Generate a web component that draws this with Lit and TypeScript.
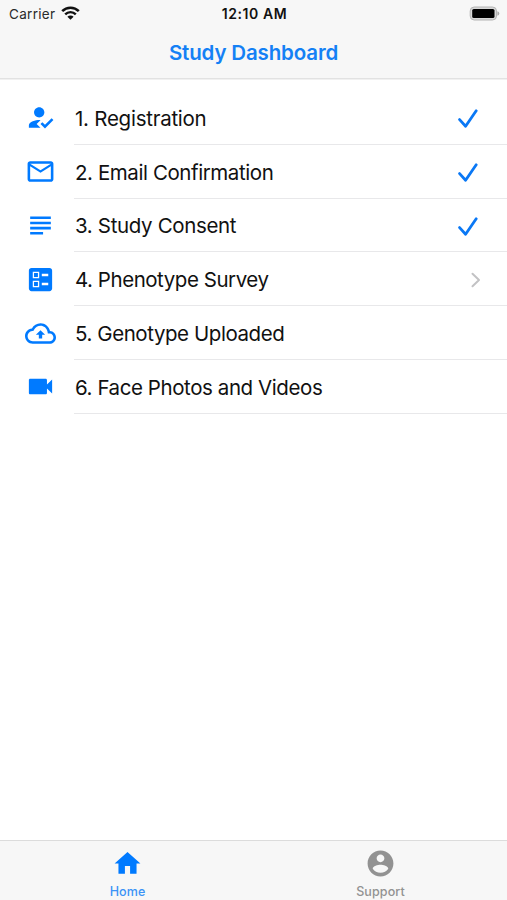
import { LitElement, html, css, svg } from "lit";
import { customElement, state } from "lit/decorators.js";
import { classMap } from "lit/directives/class-map.js";
import { styleMap } from "lit/directives/style-map.js";

const paths = {
  registered:
    "M9 17l3-2.94c-.39-.04-.68-.06-1-.06-2.67 0-8 1.34-8 4v2h9l-3-3zm2-5c2.21 0 4-1.79 4-4s-1.79-4-4-4-4 1.79-4 4 1.79 4 4 4M15.47 20.5L12 17l1.4-1.41 2.07 2.08 5.13-5.17 1.4 1.41z",
  mail: "M22 6c0-1.1-.9-2-2-2H4c-1.1 0-2 .9-2 2v12c0 1.1.9 2 2 2h16c1.1 0 2-.9 2-2V6zm-2 0l-8 5-8-5h16zm0 12H4V8l8 5 8-5v10z",
  subject: "M14 17H4v2h10v-2zm6-8H4v2h16V9zM4 15h16v-2H4v2zM4 5v2h16V5H4z",
  ballot:
    "M13 9.5h5v-2h-5v2zm0 7h5v-2h-5v2zm6 4.5H5c-1.1 0-2-.9-2-2V5c0-1.1.9-2 2-2h14c1.1 0 2 .9 2 2v14c0 1.1-.9 2-2 2zM6 11h5V6H6v5zm1-4h3v3H7V7zM6 18h5v-5H6v5zm1-4h3v3H7v-3z",
  upload:
    "M19.35 10.04C18.67 6.59 15.64 4 12 4 9.11 4 6.6 5.64 5.35 8.04 2.34 8.36 0 10.91 0 14c0 3.31 2.69 6 6 6h13c2.76 0 5-2.24 5-5 0-2.64-2.05-4.78-4.65-4.96zM19 18H6c-2.21 0-4-1.79-4-4 0-2.05 1.53-3.76 3.56-3.97l1.07-.11.5-.95C8.08 7.14 9.94 6 12 6c2.62 0 4.88 1.86 5.39 4.43l.3 1.5 1.53.11c1.56.1 2.78 1.41 2.78 2.96 0 1.65-1.35 3-3 3zM8.4 13h2.3v2.9h2.6V13h2.3L12 9.4z",
  video:
    "M17 10.5V7c0-.55-.45-1-1-1H4c-.55 0-1 .45-1 1v10c0 .55.45 1 1 1h12c.55 0 1-.45 1-1v-3.5l4 4v-11l-4 4z",
  home: "M10 20v-6h4v6h5v-8h3L12 3 2 12h3v8z",
  account:
    "M12 2C6.48 2 2 6.48 2 12s4.48 10 10 10 10-4.48 10-10S17.52 2 12 2zm0 3c1.66 0 3 1.34 3 3s-1.34 3-3 3-3-1.34-3-3 1.34-3 3-3zm0 14.2c-2.5 0-4.71-1.28-6-3.22.03-1.99 4-3.08 6-3.08 1.99 0 5.97 1.09 6 3.08-1.29 1.94-3.5 3.22-6 3.22z",
};

type IconName = keyof typeof paths;

interface Step {
  icon: IconName;
  label: string;
  status: "done" | "open" | "none";
  tracking: number;
}

const steps: Step[] = [
  { icon: "registered", label: "1. Registration", status: "done", tracking: -0.25 },
  { icon: "mail", label: "2. Email Confirmation", status: "done", tracking: -0.42 },
  { icon: "subject", label: "3. Study Consent", status: "done", tracking: -0.35 },
  { icon: "ballot", label: "4. Phenotype Survey", status: "open", tracking: -0.46 },
  { icon: "upload", label: "5. Genotype Uploaded", status: "none", tracking: -0.43 },
  { icon: "video", label: "6. Face Photos and Videos", status: "none", tracking: -0.42 },
];

const tabs: { icon: IconName; label: string }[] = [
  { icon: "home", label: "Home" },
  { icon: "account", label: "Support" },
];

const icon = (name: IconName) => html`
  <svg class="icon" viewBox="0 0 24 24" aria-hidden="true">
    ${svg`<path fill-rule="evenodd" d=${paths[name]} />`}
  </svg>
`;

const check = html`
  <svg class="check" viewBox="0 0 20 20" aria-hidden="true">
    <path d="M1.6 10.6L7.6 17.2L18.2 1.8" />
  </svg>
`;

const chevron = html`
  <svg class="chevron" viewBox="0 0 10 16" aria-hidden="true">
    <path d="M1.5 1.8L8 8L1.5 14.2" />
  </svg>
`;

@customElement("app-root")
export class AppRoot extends LitElement {
  @state() private tab = "Home";

  static styles = css`
    :host {
      display: flex;
      flex-direction: column;
      height: 900px;
      background: #fff;
      color: #111;
      font-family: Inter, "Liberation Sans", sans-serif;
      overflow: hidden;
    }
    .header {
      box-sizing: border-box;
      height: 79px;
      flex: none;
      background: #f7f7f7;
      border-bottom: 1px solid #e2e2e2;
      box-shadow: 0 1px 0 #f1f1f1;
    }
    .status {
      display: grid;
      grid-template-columns: 1fr auto 1fr;
      align-items: center;
      height: 27px;
      padding: 0 7px 0 9px;
      font-size: 13.5px;
    }
    .carrier {
      display: flex;
      align-items: center;
      gap: 6px;
      letter-spacing: 0.3px;
      color: #2a2a2a;
    }
    .wifi {
      width: 19px;
      height: 14px;
      margin-top: -2px;
    }
    .clock {
      font-size: 14px;
      font-weight: 600;
      letter-spacing: 0.55px;
    }
    .battery {
      justify-self: end;
      width: 31px;
      height: 15px;
      margin-top: -1px;
    }
    .title {
      margin: 0;
      height: 51px;
      line-height: 51px;
      text-align: center;
      font-size: 20.5px;
      font-weight: 600;
      letter-spacing: -0.15px;
      color: #1480f5;
    }
    .list {
      flex: 1;
      margin: 0;
      padding: 12px 0 0;
      list-style: none;
    }
    .row {
      display: flex;
      height: 53.8px;
      padding-left: 25px;
      align-items: center;
    }
    .icon {
      display: block;
      width: 31px;
      height: 31px;
      flex: none;
      fill: #007aff;
    }
    .body {
      box-sizing: border-box;
      display: flex;
      flex: 1;
      align-items: center;
      justify-content: space-between;
      height: 100%;
      margin-left: 18px;
      padding: 2px 26px 0 1px;
      border-bottom: 1px solid #e8e8ea;
      font-size: 20.5px;
    }
    .check {
      width: 20px;
      height: 20px;
      margin: 2px 3px 0 0;
      fill: none;
      stroke: #0a78f5;
      stroke-width: 2.8;
      stroke-linecap: round;
      stroke-linejoin: round;
    }
    .chevron {
      width: 10px;
      height: 16px;
      fill: none;
      stroke: #c2c2c4;
      stroke-width: 2;
      stroke-linecap: round;
      stroke-linejoin: round;
    }
    .tabs {
      box-sizing: border-box;
      display: flex;
      flex: none;
      height: 60px;
      border-top: 1px solid #dcdcdc;
      background: #f7f7f7;
    }
    .tab {
      flex: 1;
      display: flex;
      flex-direction: column;
      align-items: center;
      padding-top: 7px;
      color: #929292;
      font-size: 12.5px;
      font-weight: 500;
      letter-spacing: 0.1px;
    }
    .tab .icon {
      fill: #929292;
    }
    .tab .name {
      margin-top: 4px;
      line-height: 17px;
    }
    .tab.active {
      padding-left: 1px;
      color: #3c93f6;
    }
    .tab.active .icon {
      fill: #007aff;
    }
  `;

  render() {
    return html`
      <header class="header">
        <div class="status">
          <div class="carrier">
            <span>Carrier</span>
            <svg class="wifi" viewBox="0 0 19 14" aria-hidden="true">
              <path d="M1.2 5.1A11.8 11.8 0 0 1 17.8 5.1" fill="none" stroke="#111" stroke-width="2.6" />
              <path d="M4.2 8.3A7.5 7.5 0 0 1 14.8 8.3" fill="none" stroke="#111" stroke-width="2.4" />
              <path d="M9.5 13.8L6.4 10.7A4.4 4.4 0 0 1 12.6 10.7Z" fill="#111" />
            </svg>
          </div>
          <span class="clock">12:10 AM</span>
          <svg class="battery" viewBox="0 0 31 15" aria-hidden="true">
            <rect x="1.2" y="1" width="26.3" height="13" rx="4" fill="#d8d8d8" stroke="#b4b4b4" />
            <rect x="3.2" y="3" width="22.3" height="9" rx="1.6" fill="#000" />
            <path d="M28.4 5.2Q30.3 5.8 30.3 7.5T28.4 9.8Z" fill="#aaa" />
          </svg>
        </div>
        <h1 class="title">Study Dashboard</h1>
      </header>
      <ul class="list">
        ${steps.map(
          (step) => html`
            <li class="row">
              ${icon(step.icon)}
              <div class="body">
                <span style=${styleMap({ letterSpacing: `${step.tracking}px` })}>${step.label}</span>
                ${step.status === "done" ? check : step.status === "open" ? chevron : null}
              </div>
            </li>
          `
        )}
      </ul>
      <nav class="tabs">
        ${tabs.map(
          (t) => html`
            <div
              class=${classMap({ tab: true, active: t.label === this.tab })}
              @click=${() => (this.tab = t.label)}
            >
              ${icon(t.icon)}
              <span class="name">${t.label}</span>
            </div>
          `
        )}
      </nav>
    `;
  }
}
